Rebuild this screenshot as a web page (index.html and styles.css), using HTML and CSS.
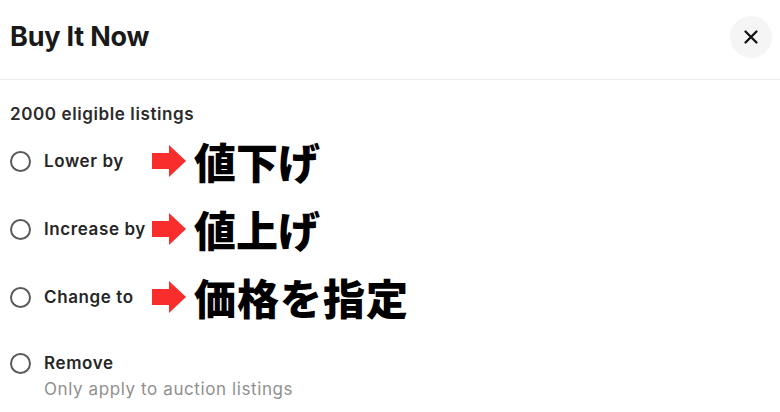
FILE: index.html
```html
<!DOCTYPE html>
<html>
<head>
<meta charset="utf-8">
<link rel="stylesheet" href="styles.css">
</head>
<body>
<div class="dialog">
  <header class="header">
    <h1 class="title">Buy It Now</h1>
    <button class="close" aria-label="Close">
      <svg width="16" height="16" viewBox="0 0 16 16"><path d="M2.5 2.5 L13.5 13.5 M13.5 2.5 L2.5 13.5" stroke="#111" stroke-width="2.3" stroke-linecap="round"/></svg>
    </button>
  </header>
  <main class="content">
    <div class="count">2000 eligible listings</div>
    <div class="options">
      <div class="option">
        <span class="radio"></span>
        <span class="label">Lower by</span>
        <span class="arrow"><span class="shaft"></span><span class="head"></span></span>
        <span class="note">値下げ</span>
      </div>
      <div class="option">
        <span class="radio"></span>
        <span class="label">Increase by</span>
        <span class="arrow"><span class="shaft"></span><span class="head"></span></span>
        <span class="note">値上げ</span>
      </div>
      <div class="option">
        <span class="radio"></span>
        <span class="label">Change to</span>
        <span class="arrow"><span class="shaft"></span><span class="head"></span></span>
        <span class="note wide">価格を指定</span>
      </div>
      <div class="option option-remove">
        <span class="radio"></span>
        <div class="stack">
          <span class="label">Remove</span>
          <span class="sub">Only apply to auction listings</span>
        </div>
      </div>
    </div>
  </main>
</div>
</body>
</html>
```

FILE: styles.css
```css
* { box-sizing: border-box; }
html, body { margin: 0; padding: 0; background: #fff; }
body { font-family: Inter, "Noto Sans", sans-serif; color: #1a1a1a; }
.dialog { width: 780px; height: 412px; overflow: hidden; }
.header {
  height: 80px;
  display: flex;
  align-items: center;
  justify-content: space-between;
  padding: 0 8px 6px 10px;
  border-bottom: 1.5px solid #ebebeb;
}
.title {
  margin: 0;
  font-size: 27px;
  font-weight: 700;
  letter-spacing: -0.2px;
  color: #191919;
}
.close {
  width: 42px; height: 42px;
  border-radius: 50%;
  border: none;
  background: #f5f5f5;
  display: flex; align-items: center; justify-content: center;
  padding: 0;
}
.content { padding: 24px 10px 0 10px; }
.count {
  font-size: 17px;
  font-weight: 600;
  letter-spacing: 0.6px;
  color: #2b2b2b;
  line-height: 20px;
}
.options { display: flex; flex-direction: column; gap: 24px; margin-top: 15px; }
.option {
  display: flex;
  align-items: center;
  height: 44px;
}
.radio {
  width: 21px; height: 21px;
  border: 2px solid #5a5a5a;
  border-radius: 50%;
  flex: none;
  margin-right: 13px;
}
.label {
  font-size: 17px;
  font-weight: 600;
  letter-spacing: 0.6px;
  color: #262626;
  width: 108px;
  white-space: nowrap;
}
.arrow { display: flex; align-items: center; flex: none; }
.shaft { width: 17px; height: 16px; background: #fa2d2d; }
.head {
  width: 0; height: 0;
  border-top: 16px solid transparent;
  border-bottom: 16px solid transparent;
  border-left: 17px solid #fa2d2d;
}
.note {
  margin-left: 8px;
  font-family: "Noto Sans CJK JP", sans-serif;
  font-size: 42px;
  font-weight: 900;
  color: #000;
  line-height: 44px;
}
.note.wide { letter-spacing: 1px; }
.option-remove { align-items: flex-start; height: auto; margin-top: 10px; }
.stack { display: flex; flex-direction: column; margin-top: -2px; }
.stack .label { line-height: 24px; }
.sub { font-size: 17px; letter-spacing: 0.6px; color: #8f8f8f; margin-top: 3px; line-height: 22px; }
```
